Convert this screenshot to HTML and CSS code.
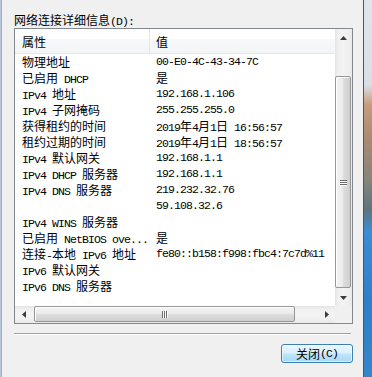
FILE: index.html
```html
<!DOCTYPE html>
<html>
<head>
<meta charset="utf-8">
<link rel="stylesheet" href="styles.css">
</head>
<body>
<div class="frame">
  <div class="edge-l"></div>
  <div class="dialog">
    <div class="label"><span class="z">网络连接详细信息</span>(D):</div>
    <div class="list">
      <div class="view">
        <div class="head">
          <div class="c1"><span class="z">属性</span></div>
          <div class="c2"><span class="z">值</span></div>
        </div>
        <div class="row"><div class="c1"><span class="z">物理地址</span></div><div class="c2">00-E0-4C-43-34-7C</div></div>
        <div class="row"><div class="c1"><span class="z">已启用</span> DHCP</div><div class="c2"><span class="z">是</span></div></div>
        <div class="row"><div class="c1">IPv4 <span class="z">地址</span></div><div class="c2">192.168.1.106</div></div>
        <div class="row"><div class="c1">IPv4 <span class="z">子网掩码</span></div><div class="c2">255.255.255.0</div></div>
        <div class="row"><div class="c1"><span class="z">获得租约的时间</span></div><div class="c2">2019<span class="z">年</span>4<span class="z">月</span>1<span class="z">日</span> 16:56:57</div></div>
        <div class="row"><div class="c1"><span class="z">租约过期的时间</span></div><div class="c2">2019<span class="z">年</span>4<span class="z">月</span>1<span class="z">日</span> 18:56:57</div></div>
        <div class="row"><div class="c1">IPv4 <span class="z">默认网关</span></div><div class="c2">192.168.1.1</div></div>
        <div class="row"><div class="c1">IPv4 DHCP <span class="z">服务器</span></div><div class="c2">192.168.1.1</div></div>
        <div class="row"><div class="c1">IPv4 DNS <span class="z">服务器</span></div><div class="c2">219.232.32.76</div></div>
        <div class="row"><div class="c1"></div><div class="c2">59.108.32.6</div></div>
        <div class="row"><div class="c1">IPv4 WINS <span class="z">服务器</span></div><div class="c2"></div></div>
        <div class="row"><div class="c1"><span class="z">已启用</span> NetBIOS ove...</div><div class="c2"><span class="z">是</span></div></div>
        <div class="row"><div class="c1"><span class="z">连接</span>-<span class="z">本地</span> IPv6 <span class="z">地址</span></div><div class="c2">fe80::b158:f998:fbc4:7c7d%11</div></div>
        <div class="row"><div class="c1">IPv6 <span class="z">默认网关</span></div><div class="c2"></div></div>
        <div class="row"><div class="c1">IPv6 DNS <span class="z">服务器</span></div><div class="c2"></div></div>
      </div>
      <div class="vscroll">
        <div class="btn"><svg width="7" height="4" viewBox="0 0 7 4"><polygon points="0,4 7,4 3.5,0" fill="#3c3c3c"/></svg></div>
        <div class="vgap"></div>
        <div class="vthumb"><div class="vgrip"><i></i><i></i><i></i></div></div>
        <div class="fill"></div>
        <div class="btn"><svg width="7" height="4" viewBox="0 0 7 4"><polygon points="0,0 7,0 3.5,4" fill="#3c3c3c"/></svg></div>
      </div>
      <div class="hscroll">
        <div class="btn"><svg width="4" height="7" viewBox="0 0 4 7"><polygon points="4,0 4,7 0,3.5" fill="#3c3c3c"/></svg></div>
        <div class="hgap"></div>
        <div class="hthumb"><div class="hgrip"><i></i><i></i><i></i></div></div>
        <div class="fill"></div>
        <div class="btn"><svg width="4" height="7" viewBox="0 0 4 7"><polygon points="0,0 0,7 4,3.5" fill="#3c3c3c"/></svg></div>
      </div>
      <div class="corner"></div>
    </div>
    <div class="sep"></div>
    <div class="actions">
      <button class="close"><span class="z">关闭</span>(C)</button>
    </div>
  </div>
  <div class="edge-r"></div>
  <div class="strip"></div>
</div>
</body>
</html>
```

FILE: styles.css
```css
html, body {
  margin: 0;
  padding: 0;
}
body {
  width: 372px;
  height: 377px;
  overflow: hidden;
  background: #f0f0f0;
  font-family: "Liberation Mono", "Noto Sans CJK SC", monospace;
  font-size: 11.5px;
  letter-spacing: -0.9px;
  color: #000;
}
.z {
  font-family: "Noto Sans CJK SC", sans-serif;
  font-size: 12px;
  letter-spacing: 0;
}
.frame {
  display: flex;
  height: 377px;
}
.edge-l {
  width: 2px;
  background: linear-gradient(90deg, #c4d3e3, #91a6be);
}
.dialog {
  width: 361px;
  box-sizing: border-box;
  padding: 0 10px 0 12px;
  display: flex;
  flex-direction: column;
}
.edge-r {
  width: 1px;
  background: #50565c;
}
.strip {
  width: 8px;
  background: linear-gradient(180deg, #dfe5eb 0px, #d9dfe5 85px, #c49c7c 105px, #a88a72 140px, #86857a 180px, #5d7480 210px, #3b8ed3 232px, #2f7fc8 300px, #3585cc 377px);
}
.label {
  margin-top: 12px;
  height: 16px;
  line-height: 16px;
  white-space: nowrap;
}
.list {
  width: 339px;
  height: 296px;
  box-sizing: border-box;
  border: 1px solid #828790;
  background: #fff;
  display: grid;
  grid-template-columns: 320px 17px;
  grid-template-rows: 277px 17px;
}
.view {
  overflow: hidden;
}
.head {
  display: flex;
  height: 25px;
  box-sizing: border-box;
  border-bottom: 1px solid #e3e6ea;
  background: linear-gradient(180deg, #ffffff 0%, #ffffff 40%, #f7f8fa 40%, #f4f5f7 100%);
  line-height: 16px;
  padding-top: 5px;
}
.head .c1 {
  border-right: 1px solid #e3e5e8;
  margin-top: -5px;
  padding-top: 5px;
}
.row {
  display: flex;
  height: 16px;
  line-height: 16px;
  white-space: nowrap;
}
.c1 {
  width: 135px;
  flex: none;
  box-sizing: border-box;
  padding-left: 7px;
  white-space: nowrap;
  overflow: hidden;
}
.c2 {
  flex: none;
  padding-left: 6px;
  white-space: nowrap;
}
.vscroll {
  display: flex;
  flex-direction: column;
  background: linear-gradient(90deg, #e4e4e4 0, #efefef 3px, #f4f4f4 8px, #efefef 14px, #e9e9e9 17px);
}
.vscroll .btn {
  height: 17px;
  display: flex;
  align-items: center;
  justify-content: center;
  flex: none;
}
.vgap {
  height: 30px;
  flex: none;
}
.vthumb {
  height: 212px;
  flex: none;
  margin: 0 1px 0 0;
  box-sizing: border-box;
  border: 1px solid #979797;
  border-radius: 2px;
  background: linear-gradient(90deg, #f3f3f3 0%, #ececec 45%, #dcdcdc 55%, #cfcfcf 100%);
  box-shadow: inset 1px 1px 0 #fff;
  display: flex;
  align-items: center;
  justify-content: center;
}
.vgrip {
  display: flex;
  flex-direction: column;
  gap: 1px;
}
.vgrip i {
  display: block;
  width: 7px;
  height: 1px;
  background: #6a6a6a;
  box-shadow: 0 1px 0 #fff;
}
.fill {
  flex: 1;
}
.hscroll {
  display: flex;
  background: linear-gradient(180deg, #e4e4e4 0, #efefef 3px, #f4f4f4 8px, #efefef 14px, #e9e9e9 17px);
}
.hscroll .btn {
  width: 17px;
  display: flex;
  align-items: center;
  justify-content: center;
  flex: none;
}
.hgap {
  width: 2px;
  flex: none;
}
.hthumb {
  width: 261px;
  flex: none;
  margin: 0 0 1px 0;
  box-sizing: border-box;
  border: 1px solid #979797;
  border-radius: 2px;
  background: linear-gradient(180deg, #f3f3f3 0%, #ececec 45%, #dcdcdc 55%, #cfcfcf 100%);
  box-shadow: inset 1px 1px 0 #fff;
  display: flex;
  align-items: center;
  justify-content: center;
}
.hgrip {
  display: flex;
  gap: 1px;
}
.hgrip i {
  display: block;
  width: 1px;
  height: 7px;
  background: #6a6a6a;
  box-shadow: 1px 0 0 #fff;
}
.corner {
  background: #f0f0f0;
}
.sep {
  margin: 9px 2px 0 0;
  border-top: 1px solid #a0a0a0;
  border-bottom: 1px solid #ffffff;
}
.actions {
  display: flex;
  justify-content: flex-end;
  margin-top: 9px;
}
.close {
  width: 72px;
  height: 19px;
  box-sizing: border-box;
  margin: 0;
  padding: 0;
  border: 1px solid #3c7fb1;
  border-radius: 3px;
  background: linear-gradient(180deg, #eaf6fd 0%, #d9f0fc 48%, #bee6fd 52%, #a7d9f5 100%);
  box-shadow: inset 0 0 0 1px rgba(255, 255, 255, 0.55);
  font-family: "Liberation Mono", "Noto Sans CJK SC", monospace;
  font-size: 11.5px;
  letter-spacing: -0.9px;
  line-height: 15px;
  color: #000;
  display: flex;
  align-items: center;
  justify-content: center;
}
```
